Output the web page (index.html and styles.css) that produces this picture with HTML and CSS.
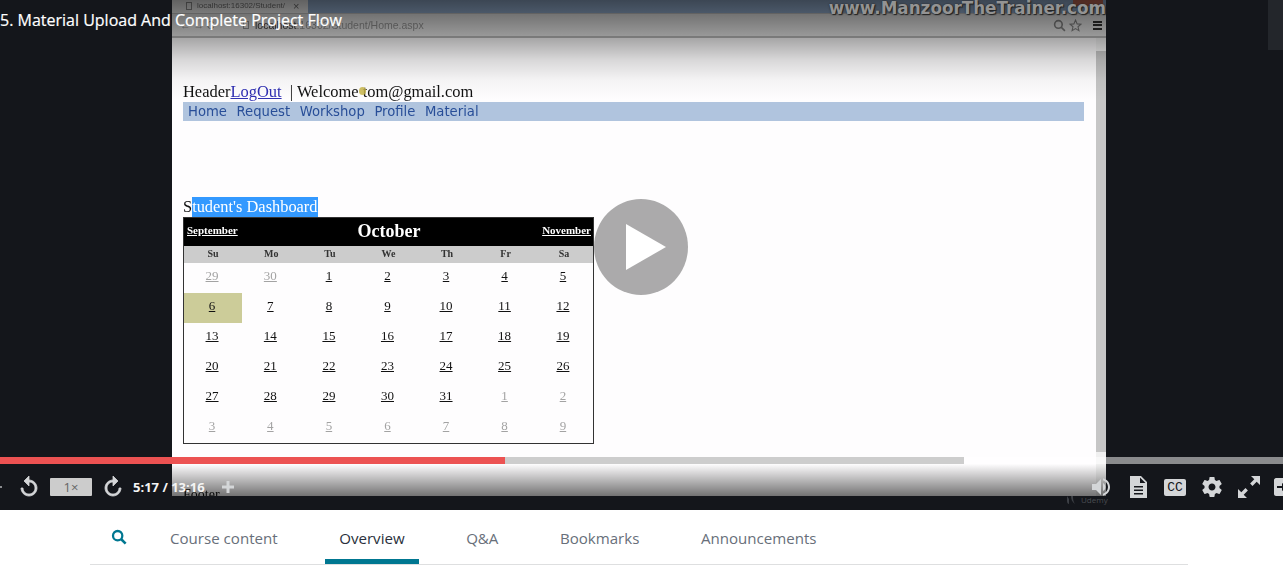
FILE: index.html
```html
<!DOCTYPE html>
<html lang="en">
<head>
  <meta charset="utf-8" />
  <title>Material Upload And Complete Project Flow</title>
  <link rel="stylesheet" href="styles.css">
</head>
<body>
  <div class="player">
    <div class="video">
      <div class="tabstrip">
        <div class="tab"><span class="tab-doc"></span>localhost:16302/Student/<span class="tab-x">×</span></div>
        <span class="win-close"></span>
      </div>
      <div class="toolbar">
        <span class="nav-btns">←&nbsp;→&nbsp;C</span>
        <span class="tab-doc url-doc"></span>
        <span class="url"><b>localhost</b>:16302/Student/Home.aspx</span>
        <svg class="tool-icon" viewBox="0 0 24 24"><circle cx="10" cy="10" r="7" fill="none" stroke="#888" stroke-width="3"/><path d="M15 15l7 7" stroke="#888" stroke-width="3"/></svg>
        <svg class="tool-icon" viewBox="0 0 24 24"><path d="M12 2l3 7 7 .6-5.400 4.700 1.700 7.200-6.300-3.900-6.300 3.900 1.700-7.200L2 9.600 9 9z" fill="none" stroke="#888" stroke-width="2"/></svg>
        <span class="burger"></span>
      </div>
      <div class="viewport">
        <div class="page">
          <div class="site-header">Header<a href="#">LogOut</a>&nbsp; | Welcome tom@gmail.com<span class="cursor"></span></div>
          <nav class="site-menu">
            <a href="#">Home</a><a href="#">Request</a><a href="#">Workshop</a><a href="#">Profile</a><a href="#">Material</a>
          </nav>
          <div class="dash-title">S<span class="selected">tudent's Dashboard</span></div>
          <table class="calendar">
            <tr class="cal-title">
              <td><a href="#">September</a></td>
              <td colspan="5" class="cal-month">October</td>
              <td class="cal-next"><a href="#">November</a></td>
            </tr>
            <tr class="cal-days"><th>Su</th><th>Mo</th><th>Tu</th><th>We</th><th>Th</th><th>Fr</th><th>Sa</th></tr>
            <tr><td class="other"><a href="#">29</a></td><td class="other"><a href="#">30</a></td><td><a href="#">1</a></td><td><a href="#">2</a></td><td><a href="#">3</a></td><td><a href="#">4</a></td><td><a href="#">5</a></td></tr>
            <tr><td class="today"><a href="#">6</a></td><td><a href="#">7</a></td><td><a href="#">8</a></td><td><a href="#">9</a></td><td><a href="#">10</a></td><td><a href="#">11</a></td><td><a href="#">12</a></td></tr>
            <tr><td><a href="#">13</a></td><td><a href="#">14</a></td><td><a href="#">15</a></td><td><a href="#">16</a></td><td><a href="#">17</a></td><td><a href="#">18</a></td><td><a href="#">19</a></td></tr>
            <tr><td><a href="#">20</a></td><td><a href="#">21</a></td><td><a href="#">22</a></td><td><a href="#">23</a></td><td><a href="#">24</a></td><td><a href="#">25</a></td><td><a href="#">26</a></td></tr>
            <tr><td><a href="#">27</a></td><td><a href="#">28</a></td><td><a href="#">29</a></td><td><a href="#">30</a></td><td><a href="#">31</a></td><td class="other"><a href="#">1</a></td><td class="other"><a href="#">2</a></td></tr>
            <tr><td class="other"><a href="#">3</a></td><td class="other"><a href="#">4</a></td><td class="other"><a href="#">5</a></td><td class="other"><a href="#">6</a></td><td class="other"><a href="#">7</a></td><td class="other"><a href="#">8</a></td><td class="other"><a href="#">9</a></td></tr>
          </table>
          <div class="site-footer">Footer</div>
        </div>
        <div class="scrollbar"><span class="scroll-up"></span></div>
      </div>
    </div>

    <!-- overlays -->
    <div class="shade-top"></div>
    <div class="shade-bottom"></div>
    <div class="watermark">www.ManzoorTheTrainer.com</div>
    <div class="lesson-title">5. Material Upload And Complete Project Flow</div>
    <div class="side-toggle"></div>
    <div class="udemy-mark"><svg viewBox="0 0 10 10"><path d="M1 1v5c0 2 1 3 2 3V4zM5 1c0 3 1 6 4 8-2-3-2-5-2-8z" fill="#3d4046"/></svg>Udemy</div>
    <div class="big-play"><svg viewBox="0 0 40 46"><path d="M0 0l40 23L0 46z" fill="#fff"/></svg></div>

    <div class="controls">
      <div class="progress"><div class="progress-buffer"><div class="progress-done"></div></div></div>
      <div class="control-row">
        <div class="control-group">
          <span class="prev-tip"></span>
          <svg class="ctl thick rewind" viewBox="0 0 24 24"><path d="M12 5V1L7 6l5 5V7c3.310 0 6 2.690 6 6s-2.690 6-6 6-6-2.690-6-6H4c0 4.420 3.580 8 8 8s8-3.580 8-8-3.580-8-8-8z"/></svg>
          <span class="rate">1×</span>
          <svg class="ctl thick forward" viewBox="0 0 24 24"><path transform="matrix(-1 0 0 1 24 0)" d="M12 5V1L7 6l5 5V7c3.310 0 6 2.690 6 6s-2.690 6-6 6-6-2.690-6-6H4c0 4.420 3.580 8 8 8s8-3.580 8-8-3.580-8-8-8z"/></svg>
          <span class="time">5:17 / 13:16</span>
          <svg class="ctl bookmark" viewBox="0 0 24 24"><path d="M10 4h4v6h6v4h-6v6h-4v-6H4v-4h6z"/></svg>
        </div>
        <div class="control-group right">
          <svg class="ctl" viewBox="0 0 24 24"><path d="M3 9v6h4l5 5V4L7 9H3zm13.500 3c0-1.770-1.020-3.290-2.500-4.030v8.050c1.480-.73 2.500-2.250 2.500-4.020zM14 3.230v2.060c2.890.86 5 3.540 5 6.710s-2.110 5.850-5 6.710v2.060c4.010-.91 7-4.490 7-8.770s-2.990-7.860-7-8.770z"/></svg>
          <svg class="ctl" viewBox="0 0 24 24"><path fill-rule="evenodd" d="M4 1h11l6 6v16H4zM14 2.500V8h5.500zM8 11v1.500h9V11zm0 3.500V16h9v-1.500zM8 18v1.500h9V18z"/></svg>
          <span class="cc">CC</span>
          <svg class="ctl" viewBox="0 0 24 24"><path d="M19.430 12.980c.04-.32.07-.64.07-.98s-.03-.66-.07-.98l2.110-1.650c.19-.15.24-.42.12-.64l-2-3.460c-.12-.22-.39-.3-.61-.22l-2.490 1c-.52-.4-1.080-.73-1.690-.98l-.38-2.650C14.460 2.180 14.250 2 14 2h-4c-.25 0-.46.18-.49.420l-.38 2.650c-.61.25-1.170.59-1.690.98l-2.490-1c-.23-.09-.49 0-.61.22l-2 3.460c-.13.220-.07.490.12.640l2.110 1.650c-.04.320-.07.650-.07.980s.03.660.07.980l-2.110 1.650c-.19.150-.24.420-.12.640l2 3.460c.12.220.39.300.61.220l2.490-1c.52.400 1.080.730 1.690.980l.38 2.650c.03.240.24.420.49.420h4c.25 0 .46-.18.49-.42l.38-2.650c.61-.25 1.170-.59 1.690-.98l2.490 1c.23.090.49 0 .61-.22l2-3.460c.12-.22.07-.49-.12-.64l-2.110-1.650zM12 15.500c-1.930 0-3.500-1.570-3.500-3.500s1.570-3.500 3.500-3.500 3.500 1.570 3.500 3.500-1.570 3.500-3.500 3.500z"/></svg>
          <svg class="ctl" viewBox="0 0 24 24"><path d="M14 1h9v9l-3.300-3.300-4.200 4.200-2.400-2.400 4.200-4.200zM10 23H1v-9l3.300 3.300 4.200-4.200 2.400 2.400-4.200 4.200z"/></svg>
          <svg class="ctl exit" viewBox="0 0 24 24"><path fill-rule="evenodd" d="M5 3h17v18H5c-1 0-2-1-2-2V5c0-1 1-2 2-2zm6 5v3H6v2h5v3l5-4z"/></svg>
        </div>
      </div>
    </div>
  </div>

  <div class="tabs">
    <svg class="tabs-search" viewBox="0 0 24 24"><circle cx="10" cy="10" r="7" fill="none" stroke="#007791" stroke-width="3.400"/><path d="M15 15l7 7" stroke="#007791" stroke-width="3.800"/></svg>
    <a class="tab-link" href="#">Course content</a>
    <a class="tab-link active" href="#">Overview</a>
    <a class="tab-link" href="#">Q&amp;A</a>
    <a class="tab-link" href="#">Bookmarks</a>
    <a class="tab-link" href="#">Announcements</a>
  </div>
</body>
</html>
```

FILE: styles.css
```css
html, body {
  margin: 0;
  height: 571px;
  overflow: hidden;
  background: #fff;
}

/* player */
.player {
  position: relative;
  height: 510px;
  padding-left: 172px;
  background: #14161b;
  overflow: hidden;
  box-sizing: border-box;
}
.video {
  width: 934px;
  height: 496px;
  background: #fff;
  overflow: hidden;
  display: flex;
  flex-direction: column;
  filter: blur(0.4px);
}
.tabstrip {
  height: 13px;
  flex: none;
  background: #9db9dc;
  display: flex;
  justify-content: space-between;
}
.tab {
  width: 136px;
  padding-left: 14px;
  box-sizing: border-box;
  display: flex;
  gap: 2px;
  background: #fff;
  font: 8px/12px "Liberation Sans", sans-serif;
  color: #777;
  white-space: nowrap;
}
.tab-x {
  margin-left: 6px;
  font-size: 11px;
}
.tab-doc {
  display: block;
  flex: none;
  width: 6px;
  height: 8px;
  margin-top: 2px;
  margin-right: 3px;
  border: 1px solid #999;
  box-sizing: border-box;
}
.win-close {
  width: 30px;
  height: 6px;
  margin-right: 3px;
  background: #d0705c;
}
.toolbar {
  height: 25px;
  flex: none;
  display: flex;
  align-items: center;
  gap: 3px;
  padding-right: 4px;
  background: #eee;
  border-top: 1px solid #ccc;
  border-bottom: 2px solid #bbb;
  box-sizing: border-box;
  font: 10.500px "Liberation Sans", sans-serif;
  color: #9a9a9a;
}
.nav-btns {
  width: 68px;
  padding-left: 8px;
  box-sizing: border-box;
}
.url-doc {
  margin: 0 3px 0 0;
}
.url {
  flex: 1;
}
.url b {
  font-weight: 400;
  color: #444;
}
.tool-icon {
  width: 13px;
  height: 13px;
}
.burger {
  width: 9px;
  height: 9px;
  margin-left: 8px;
  border-top: 2px solid #333;
  border-bottom: 2px solid #333;
  box-sizing: border-box;
  background: linear-gradient(#333, #333) center / 100% 2px no-repeat;
}
.viewport {
  flex: 1;
  display: flex;
  min-height: 0;
}
.page {
  flex: 1;
  padding: 44px 12px 0 11px;
  background: #fefdfe;
  color: #111;
  font-family: "Liberation Serif", serif;
  min-width: 0;
}
.scrollbar {
  width: 10px;
  background: linear-gradient(#c6c6c6 414px, #f0f0f0 414px);
}
.scroll-up {
  display: block;
  height: 13px;
  background: #f4f4f4;
}

/* recorded site */
.site-header {
  position: relative;
  font-size: 16.450px;
  line-height: 19px;
}
.site-header a {
  color: #3030b4;
}
.cursor {
  position: absolute;
  left: 176px;
  top: 5px;
  width: 7px;
  height: 8px;
  border-radius: 50%;
  background: #c9b64b;
  opacity: 0.85;
}
.site-menu {
  height: 19px;
  margin-top: 1px;
  padding-left: 5px;
  display: flex;
  gap: 9.600px;
  background: #b0c4de;
  font: 13.200px/20px "DejaVu Sans", sans-serif;
}
.site-menu a {
  color: #284e98;
  text-decoration: none;
}
.dash-title {
  margin-top: 76px;
  height: 20px;
  font-size: 16.400px;
  line-height: 20px;
}
.selected {
  background: #3399ff;
  color: #fff;
  display: inline-block;
}
.calendar {
  width: 411px;
  height: 227px;
  border-collapse: collapse;
  border: 1px solid #333;
  table-layout: fixed;
  font-size: 13px;
  text-align: center;
}
.calendar td, .calendar th {
  padding: 0 2px 4px 0;
}
.calendar tr {
  height: 30px;
}
.calendar a {
  color: #111;
}
.calendar .cal-title {
  height: 28px;
  background: #000;
  color: #fff;
}
.calendar .cal-title td {
  font-size: 11px;
  font-weight: bold;
  text-align: left;
  padding: 0 0 3px 3px;
}
.cal-title a {
  color: #fff !important;
}
.calendar .cal-title .cal-month {
  font-size: 18px;
  text-align: center;
  padding: 0 0 1px 1px;
}
.calendar .cal-title .cal-next {
  text-align: right;
  padding: 0 2px 3px 0;
  white-space: nowrap;
}
.calendar .cal-days {
  height: 17px;
  background: #ccc;
  font-size: 10px;
  color: #333;
}
.calendar .cal-days th {
  padding: 0 0 1px;
}
.calendar .other a {
  color: #a3a3a3;
}
.calendar .today {
  background: #cccc99;
}
.site-footer {
  margin-top: 43px;
  font-size: 14px;
}

/* overlays on the video */
.shade-top {
  position: absolute;
  left: 172px;
  top: 0;
  width: 934px;
  height: 100px;
  background: linear-gradient(rgba(0, 0, 0, 0.62), rgba(0, 0, 0, 0.33) 40%, rgba(0, 0, 0, 0.15) 60%, rgba(0, 0, 0, 0.04) 80%, rgba(0, 0, 0, 0));
}
.shade-bottom {
  position: absolute;
  left: 172px;
  top: 464px;
  width: 934px;
  height: 32px;
  background: linear-gradient(rgba(0, 0, 0, 0), rgba(0, 0, 0, 0.55));
}
.watermark {
  position: absolute;
  right: 177px;
  top: 0;
  font: bold 16.800px/17px "DejaVu Sans", sans-serif;
  color: #939393;
  text-shadow: 0 0 2px #222, 1px 1px 1px #222;
  white-space: nowrap;
}
.lesson-title {
  position: absolute;
  left: 0;
  top: 9px;
  font: 400 16px/22px "Open Sans", sans-serif;
  -webkit-text-stroke: 0.2px #fff;
  color: #fff;
  white-space: nowrap;
}
.side-toggle {
  position: absolute;
  right: 0;
  top: 0;
  width: 15px;
  height: 50px;
  background: #23262b;
}
.udemy-mark {
  position: absolute;
  left: 1066px;
  top: 495px;
  display: flex;
  align-items: center;
  gap: 5px;
  font: 8px/10px "Open Sans", sans-serif;
  color: #4a4d52;
}
.udemy-mark svg {
  width: 10px;
  height: 10px;
}
.big-play {
  position: absolute;
  left: 594px;
  top: 199px;
  width: 94px;
  height: 96px;
  border-radius: 50%;
  background: rgba(120, 120, 120, 0.62);
  display: flex;
  align-items: center;
  justify-content: center;
}
.big-play svg {
  width: 40px;
  height: 46px;
  margin-left: 10px;
}

/* player controls */
.controls {
  position: absolute;
  left: 0;
  right: 0;
  top: 457px;
}
.progress {
  height: 7px;
  background: rgba(255, 255, 255, 0.5);
}
.progress-buffer {
  width: 964px;
  height: 7px;
  background: #cdcdcd;
}
.progress-done {
  width: 505px;
  height: 7px;
  background: #ec5252;
}
.control-row {
  height: 46px;
  display: flex;
  justify-content: space-between;
  align-items: center;
}
.control-group {
  display: flex;
  align-items: center;
  color: #d7d8d9;
}
.prev-tip {
  width: 2px;
  height: 2px;
  background: #8a8c8f;
}
.ctl {
  width: 24px;
  height: 24px;
  fill: #d4d6d8;
  flex: none;
}
.thick {
  stroke: #d4d6d8;
  stroke-width: 0.8;
}
.rewind {
  margin-left: 15px;
}
.rate {
  width: 42px;
  height: 18px;
  margin-left: 9px;
  background: #ccc;
  border-radius: 1px;
  color: #666;
  font: 13px/18px "Open Sans", sans-serif;
  text-align: center;
}
.forward {
  margin-left: 9px;
}
.time {
  margin-left: 8px;
  font: 700 13px/18px "Open Sans", sans-serif;
  color: #f4f4f4;
  white-space: nowrap;
}
.bookmark {
  width: 18px;
  height: 18px;
  margin-left: 14px;
}
.right {
  gap: 13px;
  margin-right: -12px;
}
.cc {
  width: 22px;
  height: 17px;
  margin: 0 1px;
  background: #d4d6d8;
  border-radius: 2px;
  color: #14161b;
  font: 13px/17px "Liberation Mono", monospace;
  text-align: center;
  flex: none;
}
.exit {
  margin-left: -3px;
}

/* tabs under the player */
.tabs {
  margin: 0 95px 0 90px;
  height: 54px;
  padding-left: 21px;
  display: flex;
  align-items: stretch;
  gap: 32.500px;
  border-bottom: 1px solid #dedfe0;
  font: 15.100px "Open Sans", sans-serif;
}
.tabs-search {
  width: 16px;
  height: 16px;
  margin-top: 19px;
  margin-right: -4px;
}
.tab-link {
  padding: 0 14.500px;
  line-height: 57px;
  color: #686f7a;
  text-decoration: none;
  white-space: nowrap;
}
.tab-link.active {
  color: #29303b;
  border-bottom: 5px solid #007791;
  box-sizing: border-box;
}
```
